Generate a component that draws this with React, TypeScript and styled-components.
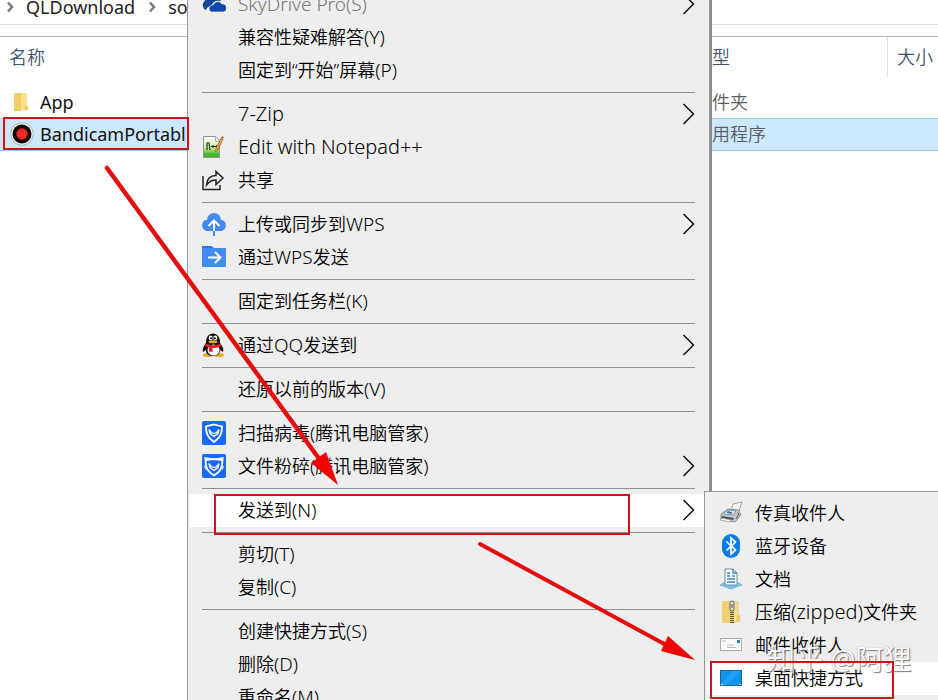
import React from "react";
import styled, { createGlobalStyle, css } from "styled-components";

const GlobalStyle = createGlobalStyle`
  * { box-sizing: border-box; }
  body {
    margin: 0;
    background: #fff;
    color: #000;
    font-family: "Noto Sans", "Noto Sans CJK SC", sans-serif;
    font-size: 18px;
    line-height: 24px;
  }
  button { font: inherit; color: inherit; }
`;

const Desktop = styled.div`
  position: relative;
  min-height: 100vh;
  overflow: hidden;
`;

/* ---------- Explorer window ---------- */

const AddressBar = styled.nav`
  display: flex;
  align-items: center;
  gap: 11px;
  height: 35px;
  margin-top: -10px;
  padding: 0 4px;
  border-bottom: 1px solid #dadada;
`;

const Crumb = styled.a`
  color: #222;
  text-decoration: none;
`;

const FileTable = styled.table`
  width: 100%;
  margin-top: 11px;
  border-top: 1px solid #b4b4b4;
  border-collapse: separate;
  border-spacing: 0;
  table-layout: fixed;
`;

const HeadCell = styled.th<{ $divided?: boolean }>`
  height: 40px;
  padding: 0 9px;
  color: #3f5470;
  font-weight: 350;
  text-align: left;
  white-space: nowrap;
  ${(p) => p.$divided && css`border-left: 1px solid #dedede;`}
`;

const Spacer = styled.tr`
  height: 8px;
`;

const FileRow = styled.tr<{ $selected?: boolean }>`
  height: 33px;
  td {
    padding: 0 9px;
    color: #5c5c5c;
    font-weight: 350;
    white-space: nowrap;
    border: 0 solid #99cdf2;
    ${(p) => p.$selected && css`padding-bottom: 2px; background: #cce8ff; border-width: 1px 0;`}
  }
`;

const FileName = styled.div`
  display: flex;
  align-items: center;
  gap: 6px;
  padding-left: 1px;
  color: #111;
  font-weight: 400;
`;

/* ---------- Menus ---------- */

const MenuPanel = styled.div`
  position: absolute;
  background: #eee;
  border: 1px solid #999;
`;

const ContextMenu = styled(MenuPanel)`
  top: -13px;
  left: 187px;
  width: 523px;
  box-shadow: 2px 0 0 #8c8c8c;
`;

const SubMenu = styled(MenuPanel)`
  top: 491px;
  left: 704px;
  width: 300px;
  padding: 5px 0;
`;

const Item = styled.button<{ $active?: boolean; $muted?: boolean }>`
  display: flex;
  align-items: center;
  gap: 12px;
  width: calc(100% - 4px);
  height: 33px;
  margin: 0 2px;
  padding: 0 12px 2px;
  border: 0;
  background: ${(p) => (p.$active ? "#fff" : "transparent")};
  color: ${(p) => (p.$muted ? "#777" : "#000")};
  font-weight: 350;
  text-align: left;
  white-space: nowrap;
`;

const IconSlot = styled.span`
  display: flex;
  flex: 0 0 24px;
  height: 24px;
`;

const Label = styled.span`
  flex: 1;
`;

const Latin = styled.span<{ $large: boolean }>`
  font-size: ${(p) => (p.$large ? 20 : 19)}px;
  font-weight: 300;
`;

const Separator = styled.hr`
  height: 1px;
  margin: 5px 14px;
  border: 0;
  background: #919191;
`;

const Watermark = styled.div`
  position: absolute;
  top: 643px;
  left: 767px;
  color: #fff;
  font-size: 28px;
  line-height: 32px;
  text-shadow: 1px 1px 1px #666, 0 0 1px #888;
  opacity: 0.85;
  pointer-events: none;
`;

const Annotations = styled.svg`
  position: absolute;
  top: 0;
  left: 0;
  pointer-events: none;
`;

/* ---------- Icons ---------- */

const Svg = ({ children }: { children: React.ReactNode }) => (
  <svg width="24" height="24" viewBox="0 0 24 24" aria-hidden="true">{children}</svg>
);

const CrumbArrow = () => (
  <svg width="11" height="12" viewBox="0 0 11 12" aria-hidden="true">
    <path d="M4 1.500l4 4.500-4 4.500" fill="none" stroke="#7c7c7c" strokeWidth="2.600" />
  </svg>
);

const Chevron = () => (
  <svg width="13" height="22" viewBox="0 0 13 22" aria-hidden="true">
    <path d="M1.500 1L11.500 11 1.500 21" fill="none" stroke="#111" strokeWidth="1.500" />
  </svg>
);

const FolderIcon = () => (
  <Svg>
    <path d="M4 3h7v18H4z" fill="#f3cd68" />
    <path d="M11 3h6v15l-6 3z" fill="#fbe08d" />
    <path d="M15 17l3-1v4h-4z" fill="#efc65d" />
  </Svg>
);

const RecordIcon = () => (
  <Svg>
    <circle cx="12" cy="12" r="11.300" fill="#f7f7f7" stroke="#a7adb2" />
    <circle cx="12" cy="12" r="9.500" fill="#0c0808" />
    <circle cx="12" cy="12" r="5.500" fill="#f32b27" stroke="#9e1411" />
  </Svg>
);

const SkyDriveIcon = () => (
  <Svg>
    <path d="M4 18a5 5 0 0 1-2-8 5 5 0 0 1 4-3 7 7 0 0 1 12-2l1 4c-5-1-9 1-9 5-3 0-5 1-6 4z" fill="#134596" />
    <path d="M9 20a4 4 0 0 1-1-6 4 4 0 0 1 3-1 5 5 0 0 1 9-1 4 4 0 0 1 1 8z" fill="#0d48aa" stroke="#eee" strokeWidth=".7" />
  </Svg>
);

const NotepadIcon = () => (
  <Svg>
    <defs>
      <linearGradient id="note" x1="0" y1="0" x2="0" y2="1">
        <stop offset=".1" stopColor="#f8fbf5" />
        <stop offset=".55" stopColor="#cdeb98" />
        <stop offset=".85" stopColor="#45b42b" />
      </linearGradient>
    </defs>
    <path d="M1.500 1.500h12l4 4v17h-16z" fill="url(#note)" stroke="#8d9690" />
    <path d="M13.500 1.500v5h4" fill="#fff" stroke="#aaa" />
    <path d="M5 15V8h2l1 7M9 11.500h7M11 10v3M14.500 10v3" fill="none" stroke="#233b18" strokeWidth="1.200" />
    <path d="M19 3l2 1-5 11-3 2 1-4z" fill="#d99c45" stroke="#9d6b32" strokeWidth=".7" />
    <path d="M19 3l1-2 2 1-1 2z" fill="#c96b5c" />
  </Svg>
);

const ShareIcon = () => (
  <Svg>
    <path d="M1 8v13.500h17V17M4.500 17c.5-7 4-9.500 9.500-9.500V3.500l7 6.500-7 6.500v-4.500c-4.500 0-7 1.500-9.500 5z" fill="none" stroke="#222" strokeWidth="1.500" />
  </Svg>
);

const CloudUploadIcon = () => (
  <Svg>
    <path d="M5 19a6 6 0 0 1-2-11h2a7 7 0 0 1 14 0h1a5.700 5.700 0 0 1-1 11z" fill="#418bf3" />
    <path d="M12 24v-6" stroke="#418bf3" strokeWidth="2" />
    <path d="M12 19V9M6.500 14L12 8.500l5.500 5.500" fill="none" stroke="#fff" strokeWidth="2" />
  </Svg>
);

const FolderSendIcon = () => (
  <Svg>
    <path d="M1 1h8l3 2h11q1 0 1 1v17q0 1-1 1H1q-1 0-1-1V2q0-1 1-1z" fill="#418bf3" />
    <path d="M0 1h9l3 2H0z" fill="#3273de" />
    <path d="M6 12.500h12M13 7l5.500 5.500L13 18" fill="none" stroke="#fff" strokeWidth="2" />
  </Svg>
);

const PenguinIcon = () => (
  <Svg>
    <ellipse cx="6" cy="22" rx="5" ry="2" fill="#e8aa22" />
    <ellipse cx="17" cy="22" rx="5" ry="2" fill="#e8aa22" />
    <path d="M4 10C1 14 0 17 1 19l3-2c0 4 3 6 7 6s7-2 7-6l3 2c1-2 0-5-3-9z" fill="#111" />
    <path d="M4 11C3-3 19-3 18 11z" fill="#111" />
    <ellipse cx="11.500" cy="17" rx="6" ry="5.500" fill="#fff" />
    <ellipse cx="8.700" cy="5" rx="2" ry="2.400" fill="#fff" />
    <ellipse cx="13.300" cy="5" rx="2" ry="2.400" fill="#fff" />
    <circle cx="9.200" cy="5.200" r="1" />
    <circle cx="12.800" cy="5.200" r="1" />
    <ellipse cx="11" cy="8.700" rx="4.500" ry="1.500" fill="#e9a820" />
    <path d="M3.500 10.500q7.500 3.500 15 0l1 2.500q-4 2.500-9 2v4l-3.500-.5V14.500Q5 14 3 13z" fill="#de2027" />
  </Svg>
);

const ShieldIcon = () => (
  <Svg>
    <rect width="24" height="24" rx="2" fill="#186bf0" />
    <path d="M12 3.500l8 2c0 7-1.500 11-8 15.500C5.500 16.500 4 12.500 4 5.500z" fill="none" stroke="#fff" strokeWidth="1.800" />
    <path d="M7 8.500q2.500 4 5 4t5-4l-1 4-4 3-4-3z" fill="#186bf0" stroke="#fff" strokeWidth="1.300" />
  </Svg>
);

const ShredIcon = () => (
  <Svg>
    <rect width="24" height="24" rx="2" fill="#186bf0" />
    <path d="M12 5l8.500 1c0 8-2 11.500-8.500 15.500C5.500 17.500 3.500 14 3.500 6z" fill="none" stroke="#fff" strokeWidth="1.800" />
    <path d="M2 3l10 1.500L22 3l-1 3.500-9-1-9 1z" fill="#e8f2ff" />
    <path d="M7 9.500q2.500 4 5 4t5-4l-1 4-4 3-4-3z" fill="#186bf0" stroke="#fff" strokeWidth="1.300" />
    <path d="M1.500 11.500l4 2.500-2 2zM22.500 11.500l-4 2.500 2 2z" fill="#cfe2ff" />
  </Svg>
);

const FaxIcon = () => (
  <Svg>
    <path d="M14 3l9-2-4 12-8 1z" fill="#f7f7f7" stroke="#8b8f92" strokeWidth=".8" />
    <path d="M2 13l7-5 11 1 2 5-6 7-14-3z" fill="#c4c8cb" stroke="#777d81" strokeWidth=".8" />
    <path d="M8 9l9 1-3 4-9-1z" fill="#eef3f6" stroke="#6b8498" strokeWidth=".8" />
    <path d="M3 15l12 2-1 2-12-2z" fill="#4c5357" />
    <path d="M8 11l5 1" fill="none" stroke="#3878a8" strokeWidth="2" />
    <path d="M18 12l2 1-3 5" fill="none" stroke="#50575b" />
    <path d="M1 19l2-2 9 2-1 2z" fill="#fff" stroke="#777" strokeWidth=".6" />
  </Svg>
);

const BluetoothIcon = () => (
  <Svg>
    <rect x="3" width="18" height="24" rx="9" fill="#0a7bea" />
    <path d="M7.500 7.500l9 8.500-4.500 4V4l4.500 4-9 8.500" fill="none" stroke="#fff" strokeWidth="1.700" />
  </Svg>
);

const DocumentIcon = () => (
  <Svg>
    <path d="M1 18l5-3h12l5 3-11 4z" fill="#81c5e9" stroke="#61a8cb" strokeWidth=".7" />
    <path d="M6 2h8l4 4v12H6z" fill="#fafdff" stroke="#74899a" />
    <path d="M14 2v4h4M11 6H8M8 9h3M13 9h3M8 12h8M8 15h8" fill="none" stroke="#388ab8" strokeWidth="1.300" />
  </Svg>
);

const ZipIcon = () => (
  <Svg>
    <path d="M3 1h13v22H3z" fill="#f2cf6f" />
    <path d="M14 2h5v19l-5 2z" fill="#fadf8f" stroke="#dfb553" strokeWidth=".7" />
    <path d="M18 15h3v7h-4z" fill="#efcb67" />
    <path d="M13 10v13" stroke="#575757" strokeWidth="4" strokeDasharray="1 1" />
    <rect x="11" y="1" width="4" height="10" rx="2" fill="#ddd" stroke="#686868" />
    <path d="M13 4v4" stroke="#555" />
  </Svg>
);

const MailIcon = () => (
  <Svg>
    <rect x="1.500" y="5.500" width="21" height="12" fill="#fafafa" stroke="#a9afb4" />
    <path d="M3 8h4M8 12h7M8 14.500h9" stroke="#b3bcc4" />
    <rect x="18" y="7" width="3" height="3" fill="#3779b8" />
  </Svg>
);

const DesktopIcon = () => (
  <Svg>
    <rect x="1.500" y="4.500" width="21" height="15" fill="#1194ed" stroke="#19659e" />
    <path d="M13 5h9L7 19H2z" fill="#35b1fb" opacity=".45" />
    <path d="M2 18.500h20" stroke="#b9e1ff" strokeDasharray="2 16" />
  </Svg>
);

/* ---------- Data ---------- */

type Entry = {
  text: string;
  icon?: React.ComponentType;
  more?: boolean;
  active?: boolean;
  muted?: boolean;
};

const groups: Entry[][] = [
  [
    { text: "SkyDrive Pro(S)", icon: SkyDriveIcon, more: true, muted: true },
    { text: "兼容性疑难解答(Y)" },
    { text: "固定到“开始”屏幕(P)" },
  ],
  [
    { text: "7-Zip", more: true },
    { text: "Edit with Notepad++", icon: NotepadIcon },
    { text: "共享", icon: ShareIcon },
  ],
  [
    { text: "上传或同步到WPS", icon: CloudUploadIcon, more: true },
    { text: "通过WPS发送", icon: FolderSendIcon },
  ],
  [{ text: "固定到任务栏(K)" }],
  [{ text: "通过QQ发送到", icon: PenguinIcon, more: true }],
  [{ text: "还原以前的版本(V)" }],
  [
    { text: "扫描病毒(腾讯电脑管家)", icon: ShieldIcon },
    { text: "文件粉碎(腾讯电脑管家)", icon: ShredIcon, more: true },
  ],
  [{ text: "发送到(N)", more: true, active: true }],
  [{ text: "剪切(T)" }, { text: "复制(C)" }],
  [{ text: "创建快捷方式(S)" }, { text: "删除(D)" }, { text: "重命名(M)" }],
];

const targets: Entry[] = [
  { text: "传真收件人", icon: FaxIcon },
  { text: "蓝牙设备", icon: BluetoothIcon },
  { text: "文档", icon: DocumentIcon },
  { text: "压缩(zipped)文件夹", icon: ZipIcon },
  { text: "邮件收件人", icon: MailIcon },
  { text: "桌面快捷方式", icon: DesktopIcon, active: true },
];

/* Latin runs are set a little larger than the Chinese text around them. */
const MixedText = ({ text, muted }: { text: string; muted?: boolean }) => (
  <>
    {text.split(/([\x20-\x7e]+)/).filter(Boolean).map((run, index) =>
      /^[\x20-\x7e]/.test(run)
        ? <Latin key={index} $large={!muted && /[a-z]/.test(run)}>{run}</Latin>
        : run
    )}
  </>
);

const MenuEntry = ({ text, icon: Icon, more, active, muted }: Entry) => (
  <Item type="button" role="menuitem" aria-haspopup={more ? "menu" : undefined} $active={active} $muted={muted}>
    <IconSlot>{Icon && <Icon />}</IconSlot>
    <Label><MixedText text={text} muted={muted} /></Label>
    {more && <Chevron />}
  </Item>
);

export default function App() {
  return (
    <>
      <GlobalStyle />
      <Desktop lang="zh-CN">
        <AddressBar>
          <CrumbArrow />
          <Crumb href="#qldownload">QLDownload</Crumb>
          <CrumbArrow />
          <Crumb href="#so">so</Crumb>
        </AddressBar>
        <FileTable>
          <colgroup>
            <col />
            <col width="202" />
            <col width="51" />
          </colgroup>
          <thead>
            <tr>
              <HeadCell>名称</HeadCell>
              <HeadCell>类型</HeadCell>
              <HeadCell $divided>大小</HeadCell>
            </tr>
          </thead>
          <tbody>
            <Spacer />
            <FileRow>
              <td><FileName><FolderIcon />App</FileName></td>
              <td>文件夹</td>
              <td />
            </FileRow>
            <FileRow $selected>
              <td><FileName><RecordIcon />BandicamPortabl</FileName></td>
              <td>应用程序</td>
              <td />
            </FileRow>
          </tbody>
        </FileTable>

        <ContextMenu role="menu">
          {groups.map((group, index) => (
            <React.Fragment key={index}>
              {index > 0 && <Separator />}
              {group.map((entry) => <MenuEntry key={entry.text} {...entry} />)}
            </React.Fragment>
          ))}
        </ContextMenu>

        <SubMenu role="menu">
          {targets.map((entry) => <MenuEntry key={entry.text} {...entry} />)}
        </SubMenu>

        <Watermark>知乎 @阿狸</Watermark>

        <Annotations width="938" height="700" viewBox="0 0 938 700" aria-hidden="true">
          <g fill="none" stroke="#cc1518" strokeWidth="2">
            <rect x="4" y="118" width="184" height="31" />
            <rect x="215" y="495" width="414" height="39" />
            <rect x="711" y="662" width="182" height="36" />
          </g>
          <g stroke="#e60d0d" strokeLinecap="round">
            <path d="M107 168L320 460" strokeWidth="4.500" />
            <path d="M480 544L668 646" strokeWidth="4" />
          </g>
          <path d="M338 485l-27-22 15-11zM695 660l-34-9 7-15z" fill="#f40000" />
        </Annotations>
      </Desktop>
    </>
  );
}
